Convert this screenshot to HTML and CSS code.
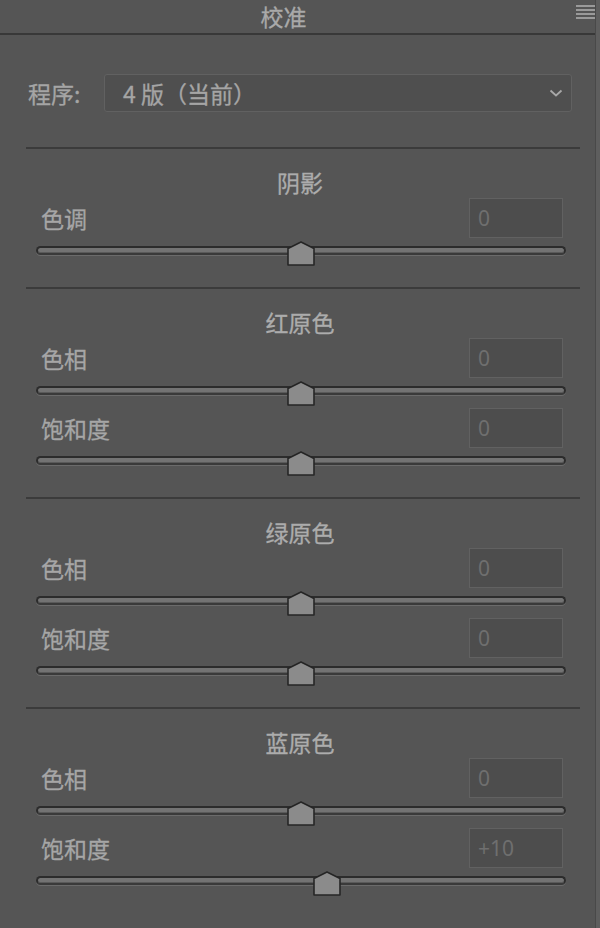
FILE: index.html
```html
<!DOCTYPE html>
<html lang="zh">
<head>
<meta charset="utf-8">
<title>校准</title>
<link rel="stylesheet" href="styles.css">
</head>
<body>
<div class="panel">
  <div class="header">
    <span class="title">校准</span>
    <span class="menu"><i></i><i></i><i></i><i></i></span>
  </div>
  <div class="content">
    <div class="program">
      <span class="prog-label">程序:</span>
      <div class="select">
        <span class="select-text">4 版（当前）</span>
        <svg class="chev" width="14" height="8" viewBox="0 0 14 8"><path d="M1.5 1.5 L7 6.5 L12.5 1.5" fill="none" stroke="#a8a8a8" stroke-width="1.8"/></svg>
      </div>
    </div>

    <div class="section">
      <div class="sec-title">阴影</div>
      <div class="row">
        <div class="row-head"><span class="label">色调</span><span class="value">0</span></div>
        <div class="slider"><div class="track"><svg class="thumb" style="left:50%" width="28" height="25" viewBox="0 0 28 25"><path d="M1 7.5 L14 1 L27 7.5 L27 24 L1 24 Z" fill="#8b8b8b" stroke="#262626" stroke-width="1.6" stroke-linejoin="round"/></svg></div></div>
      </div>
    </div>

    <div class="section">
      <div class="sec-title">红原色</div>
      <div class="row">
        <div class="row-head"><span class="label">色相</span><span class="value">0</span></div>
        <div class="slider"><div class="track"><svg class="thumb" style="left:50%" width="28" height="25" viewBox="0 0 28 25"><path d="M1 7.5 L14 1 L27 7.5 L27 24 L1 24 Z" fill="#8b8b8b" stroke="#262626" stroke-width="1.6" stroke-linejoin="round"/></svg></div></div>
      </div>
      <div class="row">
        <div class="row-head"><span class="label">饱和度</span><span class="value">0</span></div>
        <div class="slider"><div class="track"><svg class="thumb" style="left:50%" width="28" height="25" viewBox="0 0 28 25"><path d="M1 7.5 L14 1 L27 7.5 L27 24 L1 24 Z" fill="#8b8b8b" stroke="#262626" stroke-width="1.6" stroke-linejoin="round"/></svg></div></div>
      </div>
    </div>

    <div class="section">
      <div class="sec-title">绿原色</div>
      <div class="row">
        <div class="row-head"><span class="label">色相</span><span class="value">0</span></div>
        <div class="slider"><div class="track"><svg class="thumb" style="left:50%" width="28" height="25" viewBox="0 0 28 25"><path d="M1 7.5 L14 1 L27 7.5 L27 24 L1 24 Z" fill="#8b8b8b" stroke="#262626" stroke-width="1.6" stroke-linejoin="round"/></svg></div></div>
      </div>
      <div class="row">
        <div class="row-head"><span class="label">饱和度</span><span class="value">0</span></div>
        <div class="slider"><div class="track"><svg class="thumb" style="left:50%" width="28" height="25" viewBox="0 0 28 25"><path d="M1 7.5 L14 1 L27 7.5 L27 24 L1 24 Z" fill="#8b8b8b" stroke="#262626" stroke-width="1.6" stroke-linejoin="round"/></svg></div></div>
      </div>
    </div>

    <div class="section">
      <div class="sec-title">蓝原色</div>
      <div class="row">
        <div class="row-head"><span class="label">色相</span><span class="value">0</span></div>
        <div class="slider"><div class="track"><svg class="thumb" style="left:50%" width="28" height="25" viewBox="0 0 28 25"><path d="M1 7.5 L14 1 L27 7.5 L27 24 L1 24 Z" fill="#8b8b8b" stroke="#262626" stroke-width="1.6" stroke-linejoin="round"/></svg></div></div>
      </div>
      <div class="row">
        <div class="row-head"><span class="label">饱和度</span><span class="value">+10</span></div>
        <div class="slider"><div class="track"><svg class="thumb" style="left:55%" width="28" height="25" viewBox="0 0 28 25"><path d="M1 7.5 L14 1 L27 7.5 L27 24 L1 24 Z" fill="#8b8b8b" stroke="#262626" stroke-width="1.6" stroke-linejoin="round"/></svg></div></div>
      </div>
    </div>
  </div>
</div>
</body>
</html>
```

FILE: styles.css
```css
html, body {
  margin: 0;
  padding: 0;
}
body {
  width: 600px;
  height: 928px;
  background: #5e5e5e;
  font-family: "Noto Sans CJK SC", "Noto Sans", sans-serif;
  color: #a7a7a7;
  overflow: hidden;
}
.panel {
  width: 595px;
  height: 928px;
  background: #555555;
  border-right: 1px solid #494949;
  position: relative;
}
.header {
  height: 33px;
  border-bottom: 2px solid #383838;
  display: flex;
  justify-content: center;
  align-items: center;
}
.title {
  font-size: 23px;
  line-height: 33px;
  color: #a9a9a9;
  margin-right: 28px;
  -webkit-text-stroke: 0.3px #a9a9a9;
}
.menu {
  position: absolute;
  top: 5px;
  right: 0;
  width: 19px;
  display: flex;
  flex-direction: column;
  gap: 2px;
}
.menu i {
  display: block;
  height: 2px;
  background: #9a9a9a;
}
.content {
  padding: 0 15px 0 26px;
}
.program {
  display: flex;
  align-items: center;
  margin-top: 39px;
  height: 38px;
}
.prog-label {
  width: 76px;
  font-size: 23px;
  line-height: 38px;
  padding-left: 2px;
  color: #a5a5a5;
  -webkit-text-stroke: 0.3px #a5a5a5;
}
.select {
  flex: 1;
  height: 36px;
  margin-right: 8px;
  border: 1px solid #616161;
  border-radius: 3px;
  background: #4f4f4f;
  display: flex;
  align-items: center;
  justify-content: space-between;
  padding: 0 8px 0 18px;
}
.select-text {
  font-size: 23px;
  color: #a5a5a5;
  line-height: 36px;
  -webkit-text-stroke: 0.3px #a5a5a5;
}
.chev {
  display: block;
}
.section {
  border-top: 2px solid #3b3b3b;
  padding-bottom: 19px;
}
.program + .section {
  margin-top: 35px;
}
.sec-title {
  height: 49px;
  box-sizing: border-box;
  padding-top: 20px;
  text-align: center;
  font-size: 23px;
  line-height: 26px;
  color: #acacac;
  padding-right: 6px;
  -webkit-text-stroke: 0.3px #acacac;
}
.row {
  height: 70px;
}
.row-head {
  height: 40px;
  display: flex;
  align-items: center;
  justify-content: space-between;
  padding: 0 17px 0 15px;
}
.label {
  font-size: 23px;
  line-height: 30px;
  color: #a6a6a6;
  -webkit-text-stroke: 0.3px #a6a6a6;
}
.value {
  width: 94px;
  height: 40px;
  box-sizing: border-box;
  border: 1px solid #616161;
  background: #4d4d4d;
  font-family: "Noto Sans", "Liberation Sans", sans-serif;
  font-size: 21px;
  line-height: 38px;
  padding-left: 8px;
  color: #6f6f6f;
}
.slider {
  height: 30px;
  padding: 8px 14px 0 10px;
  box-sizing: border-box;
}
.track {
  position: relative;
  height: 9px;
  box-sizing: border-box;
  border: 2px solid #2c2c2c;
  border-bottom-color: #3a3a3a;
  border-radius: 5px;
  background: #737373;
  box-shadow: 0 1px 0 #6b6b6b, inset 0 -1px 0 #5a5a5a;
}
.thumb {
  position: absolute;
  top: -7px;
  margin-left: -14px;
  display: block;
}
```
